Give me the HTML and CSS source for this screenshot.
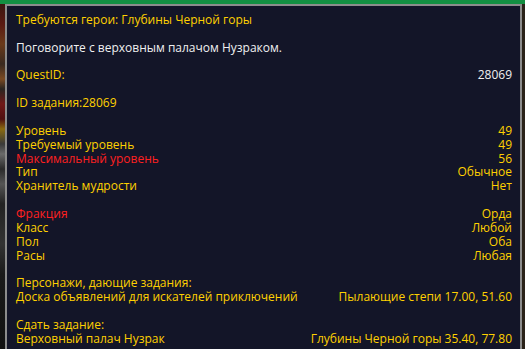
FILE: index.html
```html
<!DOCTYPE html>
<html lang="ru">
<head>
<meta charset="utf-8">
<link rel="stylesheet" href="styles.css">
</head>
<body>
<div class="topbar"></div>
<div class="frame">
  <div class="side side-left"></div>
  <div class="tooltip">
    <div class="row"><span class="gold">Требуются герои: Глубины Черной горы</span></div>
    <div class="blank"></div>
    <div class="row"><span class="white">Поговорите с верховным палачом Нузраком.</span></div>
    <div class="blank"></div>
    <div class="row"><span class="gold">QuestID:</span><span class="white">28069</span></div>
    <div class="blank"></div>
    <div class="row"><span class="gold">ID задания:28069</span></div>
    <div class="blank"></div>
    <div class="row"><span class="gold">Уровень</span><span class="gold">49</span></div>
    <div class="row"><span class="gold">Требуемый уровень</span><span class="gold">49</span></div>
    <div class="row"><span class="red">Максимальный уровень</span><span class="gold">56</span></div>
    <div class="row"><span class="gold">Тип</span><span class="gold">Обычное</span></div>
    <div class="row"><span class="gold">Хранитель мудрости</span><span class="gold">Нет</span></div>
    <div class="blank"></div>
    <div class="row"><span class="red">Фракция</span><span class="gold">Орда</span></div>
    <div class="row"><span class="gold">Класс</span><span class="gold">Любой</span></div>
    <div class="row"><span class="gold">Пол</span><span class="gold">Оба</span></div>
    <div class="row"><span class="gold">Расы</span><span class="gold">Любая</span></div>
    <div class="blank"></div>
    <div class="row"><span class="gold">Персонажи, дающие задания:</span></div>
    <div class="row"><span class="gold">Доска объявлений для искателей приключений</span><span class="gold">Пылающие степи 17.00, 51.60</span></div>
    <div class="blank"></div>
    <div class="row"><span class="gold">Сдать задание:</span></div>
    <div class="row"><span class="gold">Верховный палач Нузрак</span><span class="gold">Глубины Черной горы 35.40, 77.80</span></div>
  </div>
  <div class="side side-right"></div>
</div>
</body>
</html>
```
FILE: styles.css
```css
html, body {
  margin: 0;
  padding: 0;
  height: 349px;
  overflow: hidden;
  background: #1c1611;
}
body {
  font-family: "Open Sans", "Noto Sans", sans-serif;
  font-size: 12px;
}
.topbar {
  height: 4px;
  background: #138f42;
}
.frame {
  display: flex;
  height: 345px;
}
.side-left {
  width: 5px;
  flex: none;
  background: linear-gradient(to bottom,
    #3a1610 0px, #5a1a12 20px, #6a3a1a 40px, #3a2a20 60px, #7a4a22 75px,
    #2a2520 85px, #701818 100px, #501010 115px, #8a6a10 125px, #3a3a3a 140px,
    #6a6a6a 150px, #2a2a2a 165px, #555 180px, #222 200px, #333 240px,
    #1a1a1a 270px, #111 349px);
}
.side-right {
  width: 3px;
  flex: none;
  background: #2a2219;
}
.tooltip {
  flex: 1;
  background: #131528;
  border: 2px solid #8c8c8c;
  border-bottom: none;
  padding: 7px 8px 0 9px;
  line-height: 13.87px;
  overflow: hidden;
}
.row {
  display: flex;
  justify-content: space-between;
  white-space: nowrap;
  height: 13.87px;
}
.blank {
  height: 13.87px;
}
.gold { color: #ffd100; }
.white { color: #f0f0f0; }
.red { color: #ff2020; }
```
